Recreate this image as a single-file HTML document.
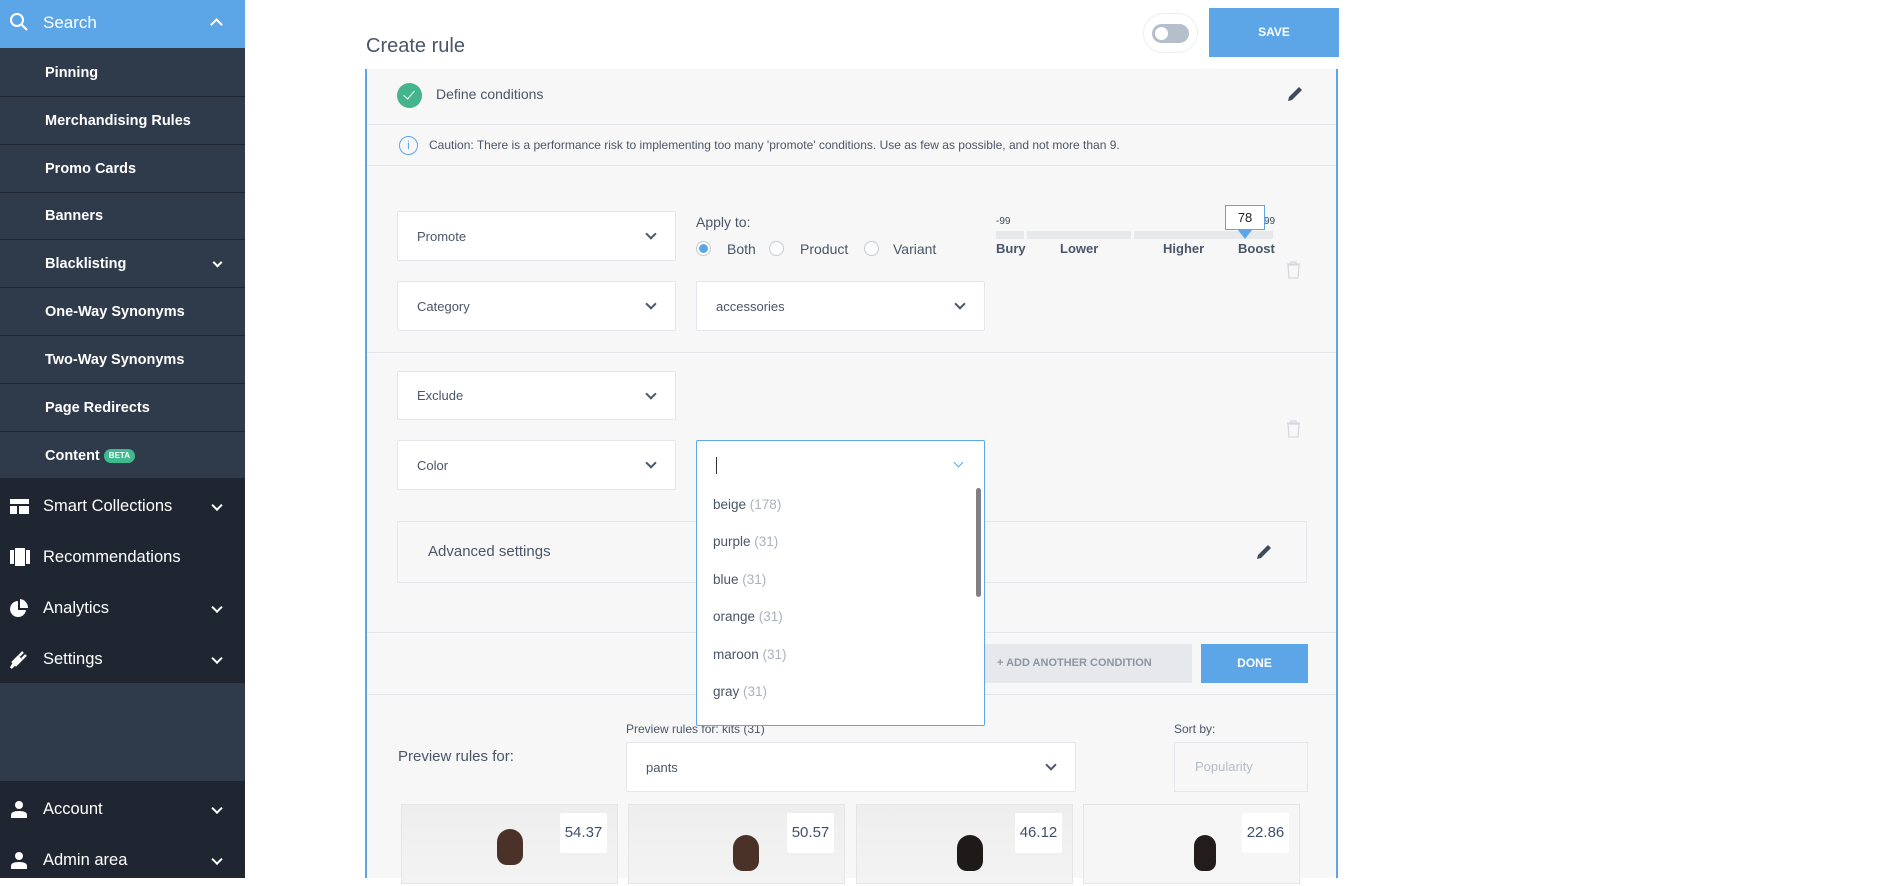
<!DOCTYPE html>
<html><head><meta charset="utf-8"><style>
*{box-sizing:border-box;margin:0;padding:0}
body{width:1891px;height:878px;overflow:hidden;background:#fff;font-family:"Liberation Sans",sans-serif;position:relative;color:#3d4b5c}
.a{position:absolute}
.sb{left:0;top:0;width:245px;height:878px;background:#2f3a4b}
.srch{left:0;top:0;width:245px;height:48px;background:#5ca6e8;color:#fff;font-size:17px}
.it{left:0;width:245px;height:48px;border-bottom:1px solid #1e2530;color:#fff;font-size:14.5px;font-weight:bold;padding-left:45px;line-height:48px}
.dk{left:0;width:245px;background:#1f2631}
.mi{left:0;width:245px;height:51px;color:#fff;font-size:16.5px;line-height:51px;padding-left:43px}
.chev{position:absolute;right:24px;top:50%;width:8px;height:8px;border-right:2px solid #fff;border-bottom:2px solid #fff;transform:translateY(-70%) rotate(45deg)}
.sel{background:#fff;border:1px solid #e3e6ea;border-radius:2px;font-size:13px;color:#4a5668;padding-left:19px;display:flex;align-items:center}
.sel .c{position:absolute;right:20px;top:50%;width:8px;height:8px;border-right:2px solid #4a5668;border-bottom:2px solid #4a5668;transform:translateY(-75%) rotate(45deg)}
.hl{height:1px;background:#e2e5e9}
.dd{font-size:13.5px;color:#4a5668;left:713px}
.dd span{color:#a9b2bd}
.card{top:806px;width:217px;height:80px;background:linear-gradient(#eeeeee,#f3f3f3);border:1px solid #e5e5e5}
.sc{top:8px;right:10px;width:47px;height:40px;background:#fff;border-radius:2px;font-size:15px;color:#3e5068;text-align:center;line-height:40px}
.hd{width:26px;height:36px;border-radius:13px 13px 10px 10px;background:#4a3228;top:24px}
</style></head><body>
<div class="a sb"></div>
<div class="a srch">
<svg class="a" style="left:9px;top:12px" width="20" height="20" viewBox="0 0 20 20"><circle cx="8" cy="8" r="6" fill="none" stroke="#fff" stroke-width="2"/><path d="M12.5 12.5L18 18" stroke="#fff" stroke-width="2.2"/></svg>
<span class="a" style="left:43px;top:13px">Search</span>
<div class="a" style="right:24px;top:20px;width:9px;height:9px;border-left:2px solid #fff;border-top:2px solid #fff;transform:rotate(45deg)"></div>
</div>
<div class="a it" style="top:49px">Pinning</div>
<div class="a it" style="top:97px">Merchandising Rules</div>
<div class="a it" style="top:145px">Promo Cards</div>
<div class="a it" style="top:192px">Banners</div>
<div class="a it" style="top:240px">Blacklisting<span class="chev" style="width:7px;height:7px"></span></div>
<div class="a it" style="top:288px">One-Way Synonyms</div>
<div class="a it" style="top:336px">Two-Way Synonyms</div>
<div class="a it" style="top:384px">Page Redirects</div>
<div class="a it" style="top:432px;border:none">Content <span style="display:inline-block;background:#3dbb8e;color:#fff;font-size:8px;border-radius:7px;padding:0 5px;line-height:14px;vertical-align:2px">BETA</span></div>
<div class="a dk" style="top:478px;height:205px"></div>
<div class="a mi" style="top:481px"><div class="a" style="left:10px;top:18px;width:19px;height:15px;background:#fff;border-top:5px solid #fff"><div class="a" style="left:0;top:0;width:19px;height:2px;background:#1f2631"></div><div class="a" style="left:7px;top:2px;width:2px;height:8px;background:#1f2631"></div></div>Smart Collections<span class="chev"></span></div>
<div class="a mi" style="top:532px"><div class="a" style="left:10px;top:18px;width:4px;height:14px;background:#fff"></div><div class="a" style="left:15px;top:16px;width:10px;height:18px;background:#fff"></div><div class="a" style="left:26px;top:18px;width:4px;height:14px;background:#fff"></div>Recommendations</div>
<div class="a mi" style="top:583px"><svg class="a" style="left:9px;top:16px" width="20" height="20" viewBox="0 0 20 20"><path d="M9 2A8 8 0 1 0 17 11H9Z" fill="#fff"/><path d="M11 0V9H19A9 9 0 0 0 11 0Z" fill="#fff"/></svg>Analytics<span class="chev"></span></div>
<div class="a mi" style="top:634px"><svg class="a" style="left:9px;top:15px" width="20" height="20" viewBox="0 0 20 20"><path d="M2 19L6 15L4 13L9 8L12 11L7 16L5 14Z M10 7L14 3M13 10L17 6" stroke="#fff" stroke-width="2.5" fill="#fff"/></svg>Settings<span class="chev"></span></div>
<div class="a dk" style="top:781px;height:97px"></div>
<div class="a mi" style="top:784px"><svg class="a" style="left:10px;top:16px" width="18" height="18" viewBox="0 0 18 18"><circle cx="9" cy="5" r="4" fill="#fff"/><path d="M1 18V15Q1 11 9 11Q17 11 17 15V18Z" fill="#fff"/></svg>Account<span class="chev"></span></div>
<div class="a mi" style="top:835px"><svg class="a" style="left:10px;top:16px" width="18" height="18" viewBox="0 0 18 18"><circle cx="9" cy="5" r="4" fill="#fff"/><path d="M1 18V15Q1 11 9 11Q17 11 17 15V18Z" fill="#fff"/></svg>Admin area<span class="chev"></span></div>

<div class="a" style="left:366px;top:35px;font-size:20px;color:#4a5668">Create rule</div>
<div class="a" style="left:1143px;top:13px;width:55px;height:40px;border:1px solid #eceef1;border-radius:20px;background:#fff"><div class="a" style="left:8px;top:10px;width:37px;height:19px;border-radius:10px;background:#b5bfcc"></div><div class="a" style="left:11px;top:13px;width:13px;height:13px;border-radius:50%;background:#fff"></div></div>
<div class="a" style="left:1209px;top:8px;width:130px;height:49px;background:#5ca6e8;color:#fff;font-size:12px;font-weight:bold;text-align:center;line-height:49px">SAVE</div>

<div class="a" style="left:365px;top:69px;width:973px;height:809px;background:#f7f7f7;border-left:2px solid #5ca6e8;border-right:2px solid #5ca6e8"></div>
<div class="a" style="left:397px;top:83px;width:25px;height:25px;border-radius:50%;background:#43b48c"><div class="a" style="left:9px;top:5px;width:6px;height:11px;border-right:1.5px solid #fff;border-bottom:1.5px solid #fff;transform:rotate(40deg)"></div></div>
<div class="a" style="left:436px;top:86px;font-size:14px;color:#4a5668">Define conditions</div>
<svg class="a" style="left:1285px;top:84px" width="20" height="20" viewBox="0 0 20 20"><path d="M3 17L4 13L14 3L17 6L7 16Z" fill="#3d4b5c"/></svg>
<div class="a hl" style="left:367px;top:124px;width:969px"></div>
<div class="a" style="left:399px;top:136px;width:19px;height:19px;border:1.3px solid #5ca6e8;border-radius:50%;color:#5ca6e8;font-size:12px;text-align:center;line-height:17px">i</div>
<div class="a" style="left:429px;top:138px;font-size:12px;color:#4a5668">Caution: There is a performance risk to implementing too many 'promote' conditions. Use as few as possible, and not more than 9.</div>
<div class="a hl" style="left:367px;top:165px;width:969px"></div>

<div class="a sel" style="left:397px;top:211px;width:279px;height:50px">Promote<i class="c"></i></div>
<div class="a" style="left:696px;top:214px;font-size:14px;color:#4a5668">Apply to:</div>
<div class="a" style="left:696px;top:241px;width:15px;height:15px;border:1px solid #c4cad2;border-radius:50%;background:#fff"><div class="a" style="left:2px;top:2px;width:9px;height:9px;border-radius:50%;background:#5ca6e8"></div></div>
<div class="a" style="left:727px;top:241px;font-size:14px;color:#4a5668">Both</div>
<div class="a" style="left:769px;top:241px;width:15px;height:15px;border:1px solid #c4cad2;border-radius:50%;background:#fff"></div>
<div class="a" style="left:800px;top:241px;font-size:14px;color:#4a5668">Product</div>
<div class="a" style="left:864px;top:241px;width:15px;height:15px;border:1px solid #c4cad2;border-radius:50%;background:#fff"></div>
<div class="a" style="left:893px;top:241px;font-size:14px;color:#4a5668">Variant</div>
<div class="a" style="left:996px;top:216px;font-size:10px;color:#3d4b5c">-99</div>
<div class="a" style="left:1264px;top:216px;font-size:10px;color:#3d4b5c">99</div>
<div class="a" style="left:996px;top:231px;width:277px;height:8px;background:#e6e8eb"></div>
<div class="a" style="left:1024px;top:231px;width:3px;height:8px;background:#f7f7f7"></div>
<div class="a" style="left:1131px;top:231px;width:3px;height:8px;background:#f7f7f7"></div>
<div class="a" style="left:1225px;top:205px;width:40px;height:25px;border:1px solid #5ca6e8;background:#fff;font-size:13px;text-align:center;line-height:23px;color:#222">78</div>
<div class="a" style="left:1238px;top:230px;width:0;height:0;border-left:7px solid transparent;border-right:7px solid transparent;border-top:9px solid #5ca6e8"></div>
<div class="a" style="left:996px;top:241px;font-size:13px;font-weight:bold;color:#4a5668">Bury</div>
<div class="a" style="left:1060px;top:241px;font-size:13px;font-weight:bold;color:#4a5668">Lower</div>
<div class="a" style="left:1163px;top:241px;font-size:13px;font-weight:bold;color:#4a5668">Higher</div>
<div class="a" style="left:1238px;top:241px;font-size:13px;font-weight:bold;color:#4a5668">Boost</div>
<svg class="a" style="left:1286px;top:261px" width="15" height="18" viewBox="0 0 15 18"><path d="M1 3H14M5 3V1H10V3M2 4L3 17H12L13 4Z" fill="none" stroke="#d5d9de" stroke-width="1.3"/></svg>
<div class="a sel" style="left:397px;top:281px;width:279px;height:50px">Category<i class="c"></i></div>
<div class="a sel" style="left:696px;top:281px;width:289px;height:50px">accessories<i class="c"></i></div>
<div class="a hl" style="left:367px;top:352px;width:969px"></div>

<div class="a sel" style="left:397px;top:371px;width:279px;height:49px">Exclude<i class="c"></i></div>
<svg class="a" style="left:1286px;top:420px" width="15" height="18" viewBox="0 0 15 18"><path d="M1 3H14M5 3V1H10V3M2 4L3 17H12L13 4Z" fill="none" stroke="#d5d9de" stroke-width="1.3"/></svg>
<div class="a sel" style="left:397px;top:440px;width:279px;height:50px">Color<i class="c"></i></div>
<div class="a" style="left:397px;top:521px;width:910px;height:62px;border:1px solid #e3e6ea;border-radius:2px;background:#f7f7f7"></div>
<div class="a" style="left:428px;top:543px;font-size:15px;color:#4a5668">Advanced settings</div>
<svg class="a" style="left:1254px;top:542px" width="20" height="20" viewBox="0 0 20 20"><path d="M3 17L4 13L14 3L17 6L7 16Z" fill="#3d4b5c"/></svg>
<div class="a hl" style="left:367px;top:632px;width:969px"></div>
<div class="a" style="left:955px;top:644px;width:237px;height:39px;background:#e6e8eb;font-size:11px;color:#8b96a3;font-weight:bold;line-height:39px;padding-left:42px">+ ADD ANOTHER CONDITION</div>
<div class="a" style="left:1201px;top:644px;width:107px;height:39px;background:#5ca6e8;font-size:12px;color:#fff;font-weight:bold;text-align:center;line-height:39px">DONE</div>
<div class="a hl" style="left:367px;top:694px;width:969px"></div>

<div class="a" style="left:626px;top:722px;font-size:12px;color:#4a5668">Preview rules for: kits (31)</div>
<div class="a" style="left:398px;top:748px;font-size:15px;color:#4a5668">Preview rules for:</div>
<div class="a sel" style="left:626px;top:742px;width:450px;height:50px">pants<i class="c"></i></div>
<div class="a" style="left:1174px;top:722px;font-size:12px;color:#4a5668">Sort by:</div>
<div class="a" style="left:1174px;top:742px;width:134px;height:50px;border:1px solid #e3e6ea;font-size:13px;color:#b3bcc7;padding:16px 0 0 20px">Popularity</div>
<div class="a card" style="left:401px;top:804px"><div class="a hd" style="left:95px"></div><div class="a sc">54.37</div></div>
<div class="a card" style="left:628px;top:804px"><div class="a hd" style="left:104px;top:30px"></div><div class="a sc">50.57</div></div>
<div class="a card" style="left:856px;top:804px"><div class="a hd" style="left:100px;top:30px;background:#1e1a1a"></div><div class="a sc">46.12</div></div>
<div class="a card" style="left:1083px;top:804px;background:#f6f6f6"><div class="a hd" style="left:110px;top:30px;width:22px;background:#221c1c"></div><div class="a sc">22.86</div></div>

<div class="a" style="left:696px;top:440px;width:289px;height:286px;background:#fff;border:1px solid #5ca6e8;border-radius:2px;overflow:hidden">
<div class="a" style="left:19px;top:16px;width:1px;height:17px;background:#333"></div>
<div class="a" style="left:258px;top:18px;width:7px;height:7px;border-right:1.6px solid #5ca6e8;border-bottom:1.6px solid #5ca6e8;transform:rotate(45deg)"></div>
<div class="a" style="left:279px;top:47px;width:5px;height:109px;border-radius:3px;background:#808080"></div>
</div>
<div class="a dd" style="top:497px">beige <span>(178)</span></div>
<div class="a dd" style="top:534px">purple <span>(31)</span></div>
<div class="a dd" style="top:572px">blue <span>(31)</span></div>
<div class="a dd" style="top:609px">orange <span>(31)</span></div>
<div class="a dd" style="top:647px">maroon <span>(31)</span></div>
<div class="a dd" style="top:684px">gray <span>(31)</span></div>
</body></html>
